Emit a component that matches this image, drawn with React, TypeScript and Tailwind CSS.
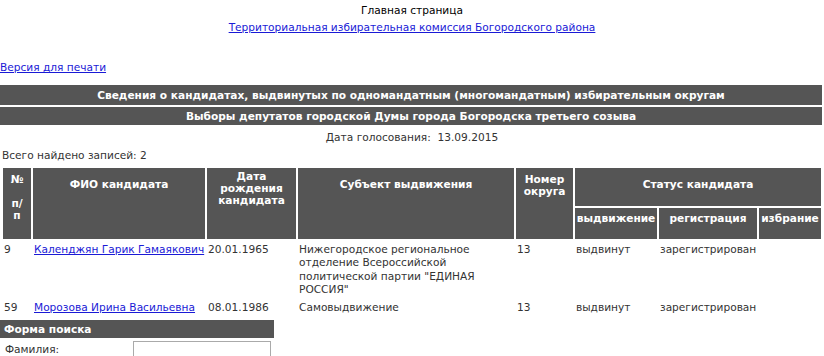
import React from "react";

const font = { fontFamily: "'DejaVu Sans', Verdana, sans-serif" };

const candidates = [
  {
    n: "9",
    name: "Календжян Гарик Гамаякович",
    born: "20.01.1965",
    subject: 'Нижегородское региональное отделение Всероссийской политической партии "ЕДИНАЯ РОССИЯ"',
    okrug: "13",
    nom: "выдвинут",
    reg: "зарегистрирован",
    win: "",
  },
  {
    n: "59",
    name: "Морозова Ирина Васильевна",
    born: "08.01.1986",
    subject: "Самовыдвижение",
    okrug: "13",
    nom: "выдвинут",
    reg: "зарегистрирован",
    win: "",
  },
];

export default function App() {
  return (
    <div className="w-[824px] h-[356px] overflow-hidden bg-white text-[10.6px] text-[#333]" style={font}>
      <div className="pt-[2px] text-center text-black leading-[17px]">
        <div>Главная страница</div>
        <a href="#" className="text-[#1a1ad6] underline">
          Территориальная избирательная комиссия Богородского района
        </a>
      </div>

      <div className="mt-[24px] leading-[15px]">
        <a href="#" className="text-[#1a1ad6] underline">
          Версия для печати
        </a>
      </div>

      <div className="mt-[10px] w-[822px] flex flex-col gap-[2px]">
        <div className="h-[20px] bg-[#555] text-white font-bold text-center leading-[20px]">
          Сведения о кандидатах, выдвинутых по одномандатным (многомандатным) избирательным округам
        </div>
        <div className="h-[18px] bg-[#555] text-white font-bold text-center leading-[18px]">
          Выборы депутатов городской Думы города Богородска третьего созыва
        </div>
      </div>

      <div className="mt-[5px] text-center leading-[15px]">Дата голосования:&nbsp;&nbsp;13.09.2015</div>
      <div className="mt-[3px] pl-[2px] leading-[15px]">Всего найдено записей: 2</div>

      <table className="mt-[3px] ml-[1px] w-[822px] border-separate border-spacing-[2px] table-fixed">
        <colgroup>
          <col className="w-[28px]" />
          <col className="w-[172px]" />
          <col className="w-[89px]" />
          <col className="w-[216px]" />
          <col className="w-[57px]" />
          <col className="w-[82px]" />
          <col className="w-[98px]" />
          <col />
        </colgroup>
        <thead className="text-white font-bold text-center leading-[12px]">
          <tr>
            <th rowSpan={2} className="bg-[#555] align-top pt-[5px] h-[38px]">
              №<br />
              <br />
              п/
              <br />п
            </th>
            <th rowSpan={2} className="bg-[#555] align-top pt-[10px]">
              ФИО кандидата
            </th>
            <th rowSpan={2} className="bg-[#555] align-top pt-[2px]">
              Дата рождения кандидата
            </th>
            <th rowSpan={2} className="bg-[#555] align-top pt-[10px]">
              Субъект выдвижения
            </th>
            <th rowSpan={2} className="bg-[#555] align-top pt-[5px]">
              Номер округа
            </th>
            <th colSpan={3} className="bg-[#555] h-[38px] align-top pt-[10px]">
              Статус кандидата
            </th>
          </tr>
          <tr>
            <th className="bg-[#555] h-[31px] align-top pt-[4px] whitespace-nowrap">выдвижение</th>
            <th className="bg-[#555] align-top pt-[4px]">регистрация</th>
            <th className="bg-[#555] align-top pt-[4px] whitespace-nowrap">избрание</th>
          </tr>
        </thead>
        <tbody className="leading-[13.4px] align-top">
          {candidates.map((c) => (
            <tr key={c.n}>
              <td className="pt-[2px] pb-[3px] px-[1px]">{c.n}</td>
              <td className="pt-[2px] px-[1px]">
                <a href="#" className="text-[#1a1ad6] underline whitespace-nowrap">
                  {c.name}
                </a>
              </td>
              <td className="pt-[2px] px-[1px]">{c.born}</td>
              <td className="pt-[2px] px-[1px]">{c.subject}</td>
              <td className="pt-[2px] px-[1px]">{c.okrug}</td>
              <td className="pt-[2px] px-[1px]">{c.nom}</td>
              <td className="pt-[2px] px-[1px]">{c.reg}</td>
              <td className="pt-[2px] px-[1px]">{c.win}</td>
            </tr>
          ))}
        </tbody>
      </table>

      <div className="w-[274px] mt-[1px]">
        <div className="h-[18px] bg-[#555] text-white font-bold pl-[4px] leading-[18px]">Форма поиска</div>
        <div className="flex items-start pt-[3px]">
          <span className="w-[133px] pl-[5px] pt-[2px] leading-[13px]">Фамилия:</span>
          <input className="w-[138px] h-[18px] border border-[#aaa] bg-white" />
        </div>
      </div>
    </div>
  );
}
